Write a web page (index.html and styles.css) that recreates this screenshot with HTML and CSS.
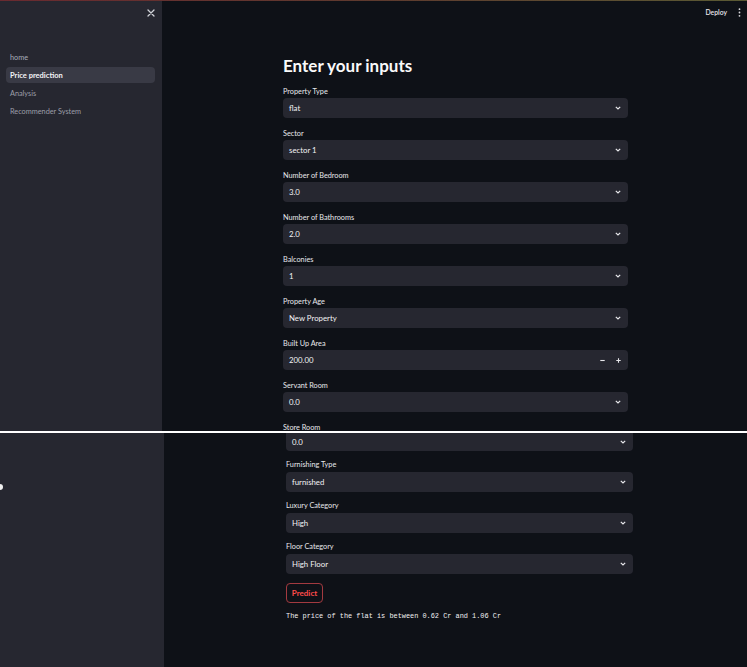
FILE: index.html
```html
<!DOCTYPE html>
<html lang="en">
<head>
<meta charset="utf-8">
<title>Price prediction</title>
<link rel="stylesheet" href="styles.css">
</head>
<body>
<div class="screen">
  <section class="shot shot-top">
    <div class="deco"></div>
    <aside class="sidebar">
      <div class="side-head">
        <svg class="close" width="8" height="8" viewBox="0 0 8 8"><path d="M1 1L7 7M7 1L1 7" stroke="#d0d2d8" stroke-width="1.3" stroke-linecap="round"/></svg>
      </div>
      <nav class="nav">
        <a class="nav-item nav-home">home</a>
        <a class="nav-item active">Price prediction</a>
        <a class="nav-item">Analysis</a>
        <a class="nav-item">Recommender System</a>
      </nav>
    </aside>
    <main class="main">
      <header class="topbar">
        <span class="deploy">Deploy</span>
        <svg class="kebab" width="3" height="9" viewBox="0 0 3 9"><circle cx="1.5" cy="1.2" r="0.9" fill="#d8d8dc"/><circle cx="1.5" cy="4.5" r="0.9" fill="#d8d8dc"/><circle cx="1.5" cy="7.8" r="0.9" fill="#d8d8dc"/></svg>
      </header>
      <div class="form form-top">
        <h1 class="title">Enter your inputs</h1>
        <div class="field"><div class="label">Property Type</div><div class="select"><span>flat</span><svg class="chev" width="6" height="4" viewBox="0 0 6 4"><path d="M0.8 0.8L3 3L5.2 0.8" fill="none" stroke="#e8e8ec" stroke-width="1.2"/></svg></div></div>
        <div class="field"><div class="label">Sector</div><div class="select"><span>sector 1</span><svg class="chev" width="6" height="4" viewBox="0 0 6 4"><path d="M0.8 0.8L3 3L5.2 0.8" fill="none" stroke="#e8e8ec" stroke-width="1.2"/></svg></div></div>
        <div class="field"><div class="label">Number of Bedroom</div><div class="select"><span>3.0</span><svg class="chev" width="6" height="4" viewBox="0 0 6 4"><path d="M0.8 0.8L3 3L5.2 0.8" fill="none" stroke="#e8e8ec" stroke-width="1.2"/></svg></div></div>
        <div class="field"><div class="label">Number of Bathrooms</div><div class="select"><span>2.0</span><svg class="chev" width="6" height="4" viewBox="0 0 6 4"><path d="M0.8 0.8L3 3L5.2 0.8" fill="none" stroke="#e8e8ec" stroke-width="1.2"/></svg></div></div>
        <div class="field"><div class="label">Balconies</div><div class="select"><span>1</span><svg class="chev" width="6" height="4" viewBox="0 0 6 4"><path d="M0.8 0.8L3 3L5.2 0.8" fill="none" stroke="#e8e8ec" stroke-width="1.2"/></svg></div></div>
        <div class="field"><div class="label">Property Age</div><div class="select"><span>New Property</span><svg class="chev" width="6" height="4" viewBox="0 0 6 4"><path d="M0.8 0.8L3 3L5.2 0.8" fill="none" stroke="#e8e8ec" stroke-width="1.2"/></svg></div></div>
        <div class="field"><div class="label">Built Up Area</div><div class="select number"><span>200.00</span><span class="steppers"><svg width="5" height="5" viewBox="0 0 5 5"><path d="M0.3 2.5H4.7" stroke="#e8e8ec" stroke-width="1.1"/></svg><svg width="5" height="5" viewBox="0 0 5 5"><path d="M0.3 2.5H4.7M2.5 0.3V4.7" stroke="#e8e8ec" stroke-width="1.1"/></svg></span></div></div>
        <div class="field"><div class="label">Servant Room</div><div class="select"><span>0.0</span><svg class="chev" width="6" height="4" viewBox="0 0 6 4"><path d="M0.8 0.8L3 3L5.2 0.8" fill="none" stroke="#e8e8ec" stroke-width="1.2"/></svg></div></div>
        <div class="field"><div class="label">Store Room</div></div>
      </div>
    </main>
  </section>
  <div class="seam"></div>
  <section class="shot shot-bottom">
    <aside class="sidebar sidebar-b">
      <span class="cursor"></span>
    </aside>
    <main class="main">
      <div class="form form-bottom">
        <div class="select select-cut"><span>0.0</span><svg class="chev" width="6" height="4" viewBox="0 0 6 4"><path d="M0.8 0.8L3 3L5.2 0.8" fill="none" stroke="#e8e8ec" stroke-width="1.2"/></svg></div>
        <div class="field"><div class="label">Furnishing Type</div><div class="select"><span>furnished</span><svg class="chev" width="6" height="4" viewBox="0 0 6 4"><path d="M0.8 0.8L3 3L5.2 0.8" fill="none" stroke="#e8e8ec" stroke-width="1.2"/></svg></div></div>
        <div class="field"><div class="label">Luxury Category</div><div class="select"><span>High</span><svg class="chev" width="6" height="4" viewBox="0 0 6 4"><path d="M0.8 0.8L3 3L5.2 0.8" fill="none" stroke="#e8e8ec" stroke-width="1.2"/></svg></div></div>
        <div class="field"><div class="label">Floor Category</div><div class="select"><span>High Floor</span><svg class="chev" width="6" height="4" viewBox="0 0 6 4"><path d="M0.8 0.8L3 3L5.2 0.8" fill="none" stroke="#e8e8ec" stroke-width="1.2"/></svg></div></div>
        <button class="predict">Predict</button>
        <p class="result">The price of the flat is between 0.62 Cr and 1.06 Cr</p>
      </div>
    </main>
  </section>
</div>
</body>
</html>
```

FILE: styles.css
```css
* { box-sizing: border-box; }
html, body {
  margin: 0;
  padding: 0;
  background: #0e1117;
  overflow: hidden;
}
body {
  width: 747px;
  height: 667px;
  font-family: Lato, "Noto Sans", sans-serif;
  color: #fafafa;
}
.screen {
  display: flex;
  flex-direction: column;
  width: 747px;
  height: 667px;
}
.shot {
  display: flex;
  overflow: hidden;
  position: relative;
  background: #0e1117;
}
.shot-top { height: 431px; }
.shot-bottom { height: 234px; }
.seam { height: 2px; background: #ffffff; }
.deco {
  position: absolute;
  left: 0; right: 0; top: 0;
  height: 1px;
  background: linear-gradient(90deg, #6a2a30, #5e3a2e 50%, #5a5a34);
  z-index: 2;
}
.sidebar {
  width: 162px;
  flex: none;
  background: #262730;
  position: relative;
}
.sidebar-b { width: 164px; }
.side-head {
  height: 24px;
  display: flex;
  justify-content: flex-end;
  align-items: center;
  padding-right: 7px;
  padding-top: 1px;
}
.nav {
  display: flex;
  flex-direction: column;
  gap: 2px;
  margin-top: 25px;
  padding: 0 7px 0 6px;
}
.nav-item {
  height: 16px;
  display: flex;
  align-items: center;
  padding-left: 4px;
  font-size: 7.3px;
  color: #9c9ea8;
  border-radius: 4px;
}
.nav-home { color: #a6adba; }
.nav-item.active {
  background: #393a45;
  color: #f4f4f6;
  font-weight: 700;
  font-size: 7.5px;
}
.cursor {
  position: absolute;
  left: -3px;
  top: 51px;
  width: 6px;
  height: 6px;
  border-radius: 50%;
  background: #f0f0f0;
}
.main {
  flex: 1;
  display: flex;
  flex-direction: column;
  min-width: 0;
}
.topbar {
  height: 24px;
  flex: none;
  display: flex;
  justify-content: flex-end;
  align-items: center;
  gap: 11px;
  padding-right: 6px;
}
.deploy {
  font-size: 6.8px;
  font-weight: 600;
  color: #e6e6ea;
}
.kebab { display: block; }
.form { display: flex; flex-direction: column; }
.form-top {
  width: 345px;
  margin: 31px auto 0 121px;
}
.title {
  margin: 0 0 9px 0;
  font-size: 17px;
  line-height: 22px;
  font-weight: 700;
  color: #fafafa;
}
.field {
  display: flex;
  flex-direction: column;
  margin-bottom: 10px;
}
.label {
  height: 12px;
  line-height: 12px;
  font-size: 7.3px;
  color: #e8e8ec;
}
.select {
  height: 20px;
  line-height: 12px;
  background: #262730;
  border-radius: 4px;
  display: flex;
  align-items: center;
  justify-content: space-between;
  padding: 0 7px 0 6px;
  font-size: 7.8px;
  color: #f2f2f4;
}
.chev { display: block; }
.steppers {
  display: flex;
  align-items: center;
  gap: 11px;
}
.steppers svg { display: block; }
.form-bottom {
  width: 347px;
  margin-left: 122px;
}
.form-bottom .field { margin-bottom: 0; margin-top: 8px; }
.form-bottom .label { margin-bottom: 1px; }
.select-cut {
  height: 18px;
  border-radius: 0 0 4px 4px;
  padding-bottom: 1px;
}
.predict {
  align-self: flex-start;
  margin-top: 9px;
  height: 20px;
  width: 37px;
  padding: 0;
  background: transparent;
  border: 1px solid #a33a40;
  border-radius: 4px;
  color: #ff4b4b;
  font-family: Lato, "Noto Sans", sans-serif;
  font-size: 8px;
  font-weight: 700;
}
.result {
  margin: 8px 0 0 0;
  font-family: "Liberation Mono", "DejaVu Sans Mono", monospace;
  font-size: 6.9px;
  line-height: 10px;
  color: #f0f0f2;
}
```
